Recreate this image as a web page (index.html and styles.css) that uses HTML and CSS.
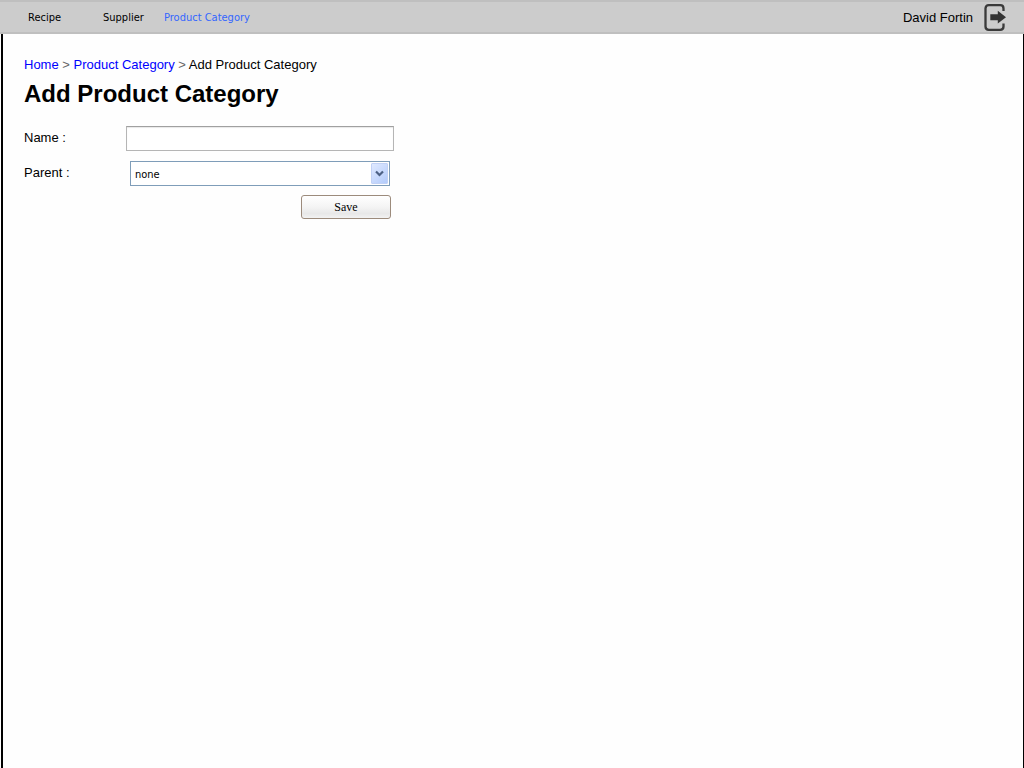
FILE: index.html
```html
<!DOCTYPE html>
<html lang="en">
<head>
<meta charset="utf-8">
<title>Add Product Category</title>
<link rel="stylesheet" href="styles.css">
</head>
<body>
<header class="topbar">
  <nav class="menu">
    <a class="menu-item menu-recipe" href="#">Recipe</a>
    <a class="menu-item menu-supplier" href="#">Supplier</a>
    <a class="menu-item menu-active" href="#">Product Category</a>
  </nav>
  <span class="user">David Fortin</span>
  <a class="logout" href="#" aria-label="Log out">
    <svg width="24" height="28" viewBox="0 0 24 28" aria-hidden="true">
      <path d="M20.500 7V4.500Q20.500 1.200 17.200 1.200H5.800Q2.500 1.200 2.500 4.500V22.500Q2.500 25.800 5.800 25.800H17.200Q20.500 25.800 20.500 22.500V19.500" fill="none" stroke="#3a3a3a" stroke-width="2.300"/>
      <path d="M7.300 10.200H14.800V6.700L23 13.200L14.800 19.600V16.300H7.300Z" fill="#333"/>
    </svg>
  </a>
</header>
<main class="page">
  <nav class="crumbs"><a href="#">Home</a> <span class="sep">&gt;</span> <a href="#">Product Category</a> <span class="sep">&gt;</span> Add Product Category</nav>
  <h1 class="title">Add Product Category</h1>
  <form class="form">
    <label class="label" for="name">Name :</label>
    <input class="text" id="name" type="text">
    <label class="label" for="parent">Parent :</label>
    <span class="combo">
      <select class="select" id="parent"><option>none</option></select>
      <span class="arrow">
        <svg width="9" height="7" viewBox="0 0 9 7" aria-hidden="true"><path d="M1 1.500L4.500 5L8 1.500" fill="none" stroke="#4d6185" stroke-width="2.200"/></svg>
      </span>
    </span>
    <button class="save" type="button">Save</button>
  </form>
</main>
</body>
</html>
```
FILE: styles.css
```css
* {
  box-sizing: border-box;
}

body {
  margin: 0;
  min-height: 100vh;
  display: flex;
  flex-direction: column;
  background: #fefefe;
  color: #000;
  font: 13px/16px "Liberation Sans", Arial, sans-serif;
}

.topbar {
  display: flex;
  align-items: center;
  height: 34px;
  padding: 2px 17px 0 28px;
  background: #ccc;
  border-top: 2px solid #bfbfbf;
  border-bottom: 2px solid #bfbfbf;
}

.menu {
  display: flex;
  flex: 1;
  font: 11px/16px "DejaVu Sans Condensed", Tahoma, sans-serif;
}

.menu-item {
  color: #000;
  text-decoration: none;
}

.menu-recipe {
  width: 75px;
}

.menu-supplier {
  width: 61px;
}

.menu-active {
  color: #36f;
}

.user {
  margin-right: 10px;
}

.logout {
  display: flex;
}

.page {
  flex: 1;
  margin-left: 1px;
  padding: 23px 21px;
  border-left: 2px solid #000;
  border-right: 1px solid #000;
}

.crumbs a {
  color: #00f;
  text-decoration: none;
}

.sep {
  color: #666;
}

.title {
  margin: 7px 0 18px;
  font-size: 24px;
  line-height: 28px;
}

.form {
  display: grid;
  grid-template-columns: 102px 268px;
  row-gap: 10px;
}

.label {
  padding-top: 4px;
}

.text {
  width: 100%;
  height: 25px;
  padding: 2px 4px;
  border: 1px solid #b5b5b5;
  border-top-color: #a0a0a0;
  background: #fff;
  box-shadow: inset 0 1px 1px #e8e8e8;
  font: inherit;
}

.combo {
  display: grid;
  margin: 0 4px;
}

.select {
  grid-area: 1 / 1;
  height: 25px;
  padding: 2px 4px 0;
  appearance: none;
  border: 1px solid #7f9db9;
  border-radius: 0;
  background: #fff;
  color: #000;
  font: 11px/16px "DejaVu Sans Condensed", Tahoma, sans-serif;
}

.arrow {
  grid-area: 1 / 1;
  justify-self: end;
  align-self: center;
  display: flex;
  align-items: center;
  justify-content: center;
  width: 17px;
  height: 21px;
  margin-right: 2px;
  border: 1px solid #c1d1f5;
  border-radius: 1px;
  background: linear-gradient(135deg, #dfe9ff, #b3cbfb);
  pointer-events: none;
}

.save {
  grid-column: 2;
  justify-self: end;
  width: 90px;
  height: 24px;
  margin: -1px 3px 0 0;
  padding: 0;
  border: 1px solid #9c8b7c;
  border-radius: 3px;
  background: linear-gradient(#fff, #f4f4f4 50%, #e8e8e8 80%, #f2f2f2);
  color: #000;
  font: 12px/16px "Liberation Serif", "Times New Roman", serif;
}
```
